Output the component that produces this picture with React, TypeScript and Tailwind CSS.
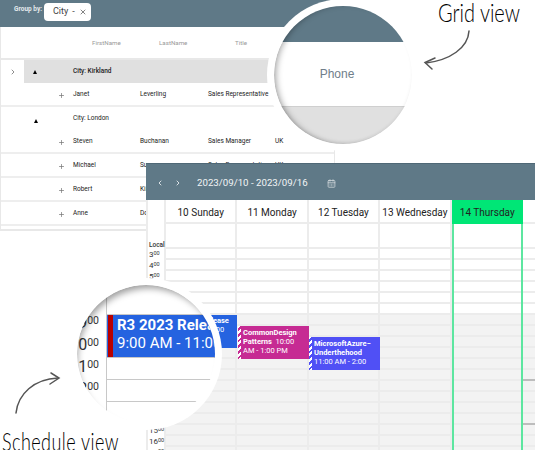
import { ChevronLeft, ChevronRight, CalendarDays, Plus, X } from 'lucide-react';

const rows = [
  { first: 'Janet', last: 'Leverling', title: 'Sales Representative', country: 'USA' },
  { group: 'City: London' },
  { first: 'Steven', last: 'Buchanan', title: 'Sales Manager', country: 'UK' },
  { first: 'Michael', last: 'Suyama', title: 'Sales Representative', country: 'UK' },
  { first: 'Robert', last: 'King', title: 'Sales Representative', country: 'UK' },
  { first: 'Anne', last: 'Dodsworth', title: 'Sales Representative', country: 'UK' },
];

const days = ['10 Sunday', '11 Monday', '12 Tuesday', '13 Wednesday', '14 Thursday', ''];
const slots = Array.from({ length: 19 }, (_, i) => i);
const hours: Record<number, string> = { 0: '3', 1: '4', 2: '5', 16: '15', 17: '16', 18: '17' };

const GridCols = 'grid grid-cols-[24px_24px_24px_67px_68px_67px_59px] items-center';

const GridView = () => (
  <div className="w-[335px] h-[231px] border-x border-b-2 border-[#e8e8e8] border-t-0 text-[6.5px] text-[#222]">
    <div className="h-[27px] bg-[#5f7987] flex items-start -mx-px pl-[14px] pt-[3px] gap-[4px]">
      <span className="text-[6.5px] font-bold text-[#e4e9ec] pt-[2px] w-[26px] whitespace-nowrap">Group by:</span>
      <span className="h-[18px] w-[47px] bg-white rounded-sm flex items-center pl-[9px] gap-[4px] text-[9px] text-[#444]">
        City <span>-</span> <X size={8} strokeWidth={2} />
      </span>
    </div>
    <div className={`${GridCols} h-[33px] pt-[3px] border-b-2 border-[#e8e8e8] text-[6.2px] text-[#999]`}>
      <span className="col-start-4 pl-[19px]">FirstName</span>
      <span className="pl-[19px]">LastName</span>
      <span className="pl-[27px]">Title</span>
    </div>
    <div className={`${GridCols} h-[23px]`}>
      <ChevronRight size={8} className="ml-[8px] text-[#555]" />
      <div className="col-start-2 col-span-6 -ml-px h-full bg-[#e0e0e0] flex items-center pl-[9px] w-[310px]">
        <span className="w-0 h-0 border-x-[2.5px] border-x-transparent border-b-[4px] border-b-black" />
        <span className="ml-[36px] font-medium">City: Kirkland</span>
      </div>
    </div>
    {rows.map((r, i) =>
      r.group ? (
        <div key={i} className={`${GridCols} h-[23px]`}>
          <span className="col-start-2 pl-[9px] w-0 h-0">
            <span className="block w-0 h-0 border-x-[2.5px] border-x-transparent border-b-[4px] border-b-black" />
          </span>
          <span className="col-start-4">{r.group}</span>
        </div>
      ) : (
        <div key={i} className={`${GridCols} h-[24px] pt-[1px] border-b-2 border-[#eeeeee]`}>
          <Plus size={7} strokeWidth={2.5} className="col-start-3 ml-[9px] mt-[2px] text-[#777]" />
          <span>{r.first}</span>
          <span>{r.last}</span>
          <span className="whitespace-nowrap">{r.title}</span>
          <span>{r.country}</span>
        </div>
      ),
    )}
  </div>
);

const Event = ({ className, hatch, children }: { className: string; hatch: string; children: React.ReactNode }) => (
  <div className={`absolute h-[33px] flex text-white text-[7.5px] leading-[9px] font-['Roboto',sans-serif] ${className}`}>
    <span className={`w-[3px] shrink-0 ${hatch}`} />
    <div className="pl-[2px] pt-[2px] min-w-0">{children}</div>
  </div>
);

const ScheduleView = () => (
  <div className="absolute left-[146px] top-[163px] w-[420px] h-[287px] bg-white flex flex-col font-['Roboto',sans-serif] overflow-hidden">
    <div className="h-[37px] shrink-0 bg-[#5f7987] border-t border-[#4f6876] flex items-center pt-[2px] text-[#f2f5f6]">
      <ChevronLeft size={8} strokeWidth={2.5} className="ml-[10px]" />
      <ChevronRight size={8} strokeWidth={2.5} className="ml-[10px]" />
      <span className="ml-[15px] text-[9.7px] whitespace-nowrap">2023/09/10 - 2023/09/16</span>
      <CalendarDays size={9} className="ml-[19px] text-[#d5dcdf]" />
    </div>
    <div className="relative flex flex-1">
      <div className="w-[20px] shrink-0 border-l-2 border-r-2 border-[#ececec] text-[#333] flex flex-col">
        <div className="h-[49px] shrink-0 flex items-end">
          <span className="text-[6.5px] font-medium leading-[8px] ml-px">Local</span>
        </div>
        {slots.map((s) => (
          <div key={s} className="h-[11px] shrink-0 ml-px leading-[11px] text-[8px]">
            {hours[s] && (
              <>
                {hours[s]}
                <span className="text-[5.5px] align-top leading-[8px]">00</span>
              </>
            )}
          </div>
        ))}
      </div>
      {days.map((d, i) => {
        const today = i === 4;
        return (
          <div
            key={i}
            className={`w-[71.4px] shrink-0 flex flex-col ${today ? 'border-x-2 border-[#5de6a0]' : i === 5 ? '' : 'border-r-2 border-[#ececec]'}`}
          >
            <div
              className={`h-[24px] shrink-0 flex items-center justify-center pt-[3px] text-[10px] whitespace-nowrap text-[#222] border-b-2 ${today ? '-mx-[2px] bg-[#00e676] border-[#00e676]' : 'border-[#ececec]'}`}
            >
              {d}
            </div>
            <div className="h-[25px] shrink-0 border-b-2 border-[#ececec]" />
            {slots.map((s) => (
              <div
                key={s}
                className={`h-[11px] shrink-0 border-b-2 ${s >= 6 ? 'bg-[#f3f3f3]' : ''} ${i === 5 && (s === 11 || s === 15) ? 'border-[#bdbdbd]' : 'border-[#ececec]'}`}
              />
            ))}
          </div>
        );
      })}
      <Event className="left-[20px] top-[115px] w-[71px] h-[22px] bg-[#2563e0]" hatch="bg-[#2563e0]">
        <div className="font-bold whitespace-nowrap pl-[1px] -mt-[1px]">R3 2023 Release</div>
        <div className="whitespace-nowrap pl-[1px]">9:00 AM - 11:00</div>
      </Event>
      <Event
        className="left-[92px] top-[126px] w-[71px] bg-[#c62b93]"
        hatch="bg-[repeating-linear-gradient(135deg,#fff_0,#fff_2px,#c62b93_2px,#c62b93_4px)]"
      >
        <div className="font-bold whitespace-nowrap">CommonDesign</div>
        <div className="whitespace-nowrap">
          <span className="font-bold">Patterns</span> &nbsp;10:00
        </div>
        <div className="whitespace-nowrap">AM - 1:00 PM</div>
      </Event>
      <Event
        className="left-[163px] top-[137px] w-[71px] bg-[#5050f5]"
        hatch="bg-[repeating-linear-gradient(135deg,#fff_0,#fff_2px,#5050f5_2px,#5050f5_4px)]"
      >
        <div className="font-bold whitespace-nowrap">MicrosoftAzure−</div>
        <div className="font-bold">Underthehood</div>
        <div className="whitespace-nowrap">11:00 AM - 2:00</div>
      </Event>
    </div>
  </div>
);

const Lens = ({ className, shadow, children }: { className: string; shadow: string; children: React.ReactNode }) => (
  <div className={`absolute w-[152px] h-[152px] rounded-full bg-white flex items-center justify-center ${className}`}>
    <div className="relative w-[138px] h-[138px] rounded-full overflow-hidden bg-white">
      {children}
      <div className={`absolute inset-0 rounded-full ${shadow}`} />
    </div>
  </div>
);

const Hand = ({ className, children }: { className: string; children: string }) => (
  <span
    className={`absolute font-['Lato',sans-serif] font-light text-black whitespace-nowrap origin-left scale-y-125 ${className}`}
  >
    {children}
  </span>
);

const App = () => (
  <div className="relative w-[535px] h-[450px] overflow-hidden bg-white font-['Roboto',sans-serif]">
    <GridView />
    <ScheduleView />

    <Lens className="left-[267px] -top-[1px]" shadow="shadow-[inset_5px_0_6px_-3px_rgba(0,0,0,0.35),inset_0_-2px_4px_-2px_rgba(0,0,0,0.15)]">
      <div className="flex flex-col h-full">
        <div className="h-[36px] shrink-0 bg-[#5f7987]" />
        <div className="h-[64px] shrink-0 flex items-center justify-center pr-[12px] text-[12px] text-[#6f7e8a] font-['Liberation_Sans',sans-serif]">
          Phone
        </div>
        <div className="flex-1 bg-[#e0e0e0] border-t border-[#cfcfcf]" />
      </div>
    </Lens>

    <Lens className="left-[70px] top-[278px]" shadow="shadow-[inset_3px_6px_7px_-3px_rgba(0,0,0,0.4)]">
      <div className="flex h-full w-[300px] font-['Roboto',sans-serif]">
        <div className="w-[30px] shrink-0 border-r border-[#c8c8c8] pt-[27px] text-[#333]">
          {['9', '10', '11', '12'].map((h) => (
            <div key={h} className="h-[22px] flex justify-end items-start pr-[7px] text-[16px] leading-[22px] whitespace-nowrap">
              {h}
              <span className="text-[10.5px] leading-[18px]">00</span>
            </div>
          ))}
        </div>
        <div className="flex-1 flex flex-col">
          <div className="h-[30px] shrink-0 border-b border-[#c8c8c8]" />
          <div className="h-[43px] shrink-0 border-b border-[#c8c8c8] bg-[#2563e0] flex text-white text-[15px] leading-[18px]">
            <span className="w-[5px] ml-[1px] shrink-0 bg-[#b80000]" />
            <div className="pl-[4px] pt-[1px] whitespace-nowrap">
              <div className="font-bold">R3 2023 Release</div>
              <div>9:00 AM - 11:00 AM</div>
            </div>
          </div>
          <div className="h-[22px] shrink-0 border-b border-[#c8c8c8]" />
          <div className="h-[22px] shrink-0 border-b border-[#c8c8c8]" />
        </div>
      </div>
    </Lens>

    <Hand className="left-[438px] top-[-4px] text-[21px] scale-x-95">Grid view</Hand>
    <Hand className="left-[2px] top-[426px] text-[20px] tracking-[0.5px] scale-x-90">Schedule view</Hand>

    <svg className="absolute left-[415px] top-[25px]" width="60" height="50" viewBox="0 0 60 50" fill="none" stroke="#555" strokeWidth="1.5" strokeLinecap="round">
      <path d="M54 6 C53 23 35 35 11 38" />
      <path d="M20 33 L10 37.5 L17 44" />
    </svg>
    <svg className="absolute left-[10px] top-[370px]" width="55" height="50" viewBox="0 0 55 50" fill="none" stroke="#555" strokeWidth="1.5" strokeLinecap="round">
      <path d="M6 43 C8 24 24 9 48 8" />
      <path d="M41 3 L49 8 L40 14" />
    </svg>
  </div>
);

export default App;
